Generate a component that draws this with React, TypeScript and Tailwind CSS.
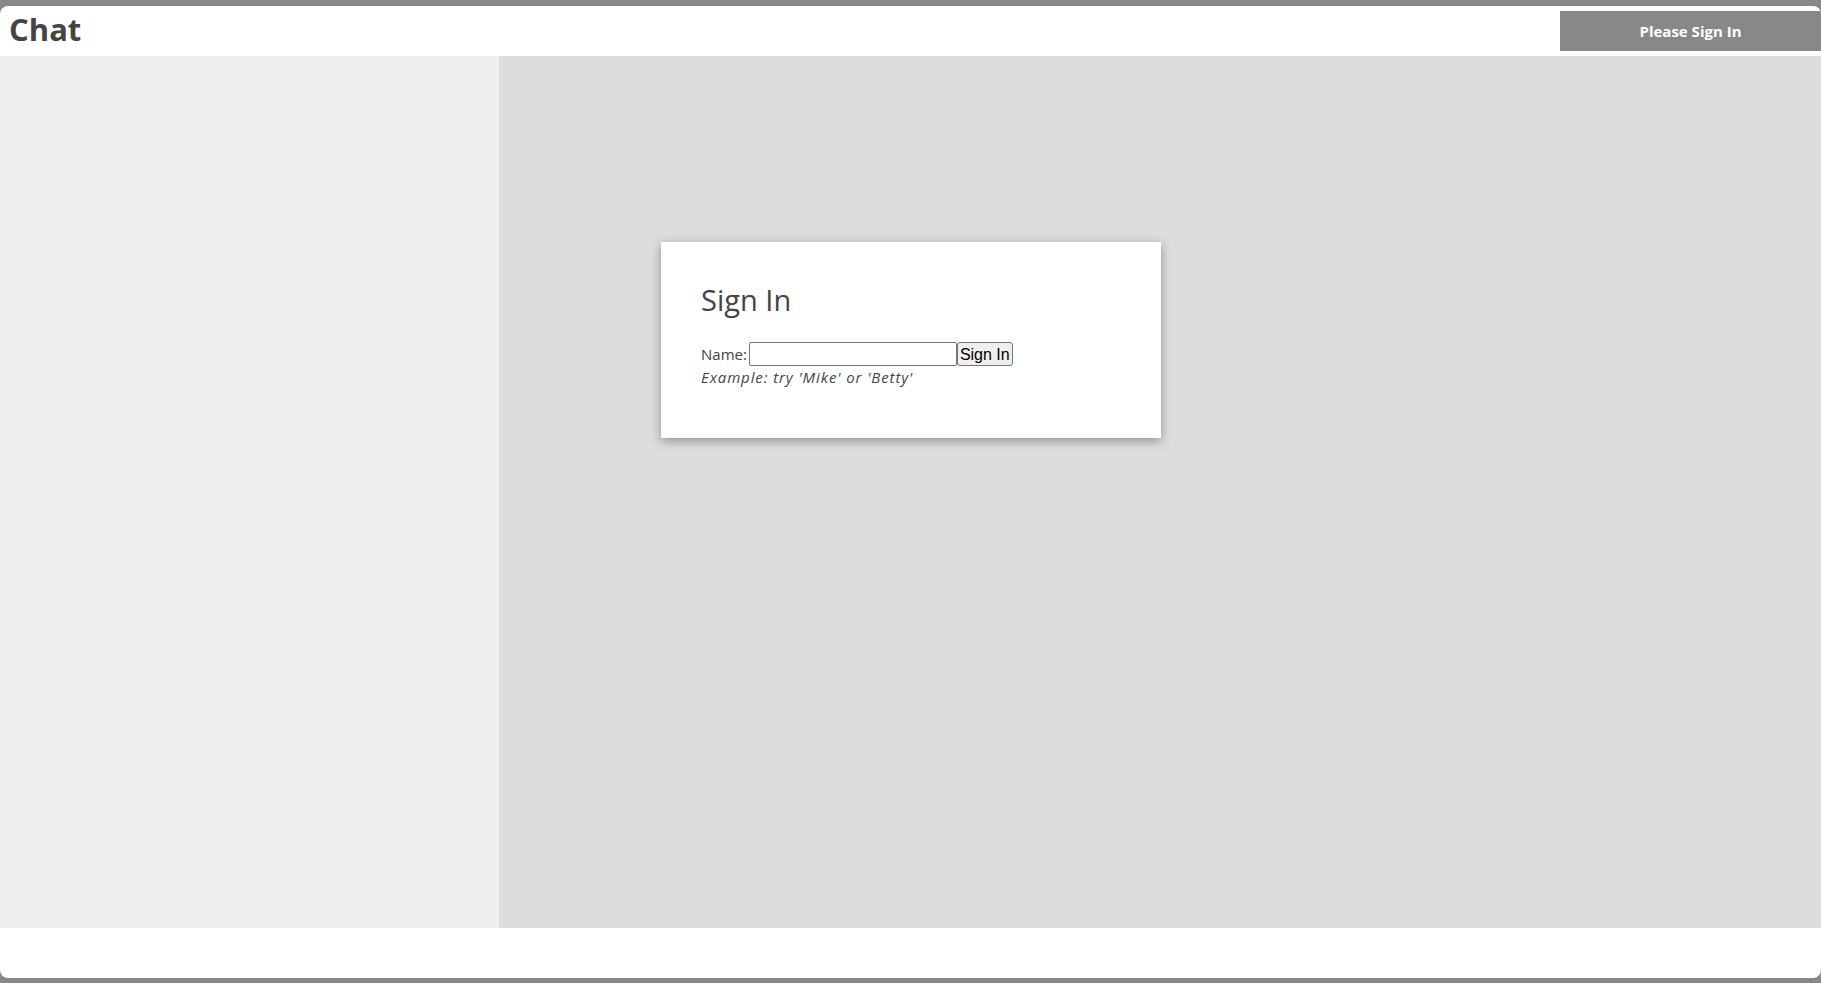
export default function App() {
  const font = { fontFamily: '"Trebuchet MS", "Open Sans", sans-serif' };
  return (
    <div className="h-screen bg-[#888] pt-[6px] pb-[5px] text-[#444] font-['Trebuchet_MS','Open_Sans',sans-serif]">
      <div className="flex h-full flex-col overflow-hidden rounded-lg bg-white">
        <header className="flex h-[50px] shrink-0 items-start justify-between">
          <h1 className="pl-[9px] pt-[3px] text-[31px] leading-[40px] font-bold">Chat</h1>
          <div className="mt-[5px] flex h-[40px] w-[261px] items-center justify-center bg-[#888] text-[15px] font-bold text-white">
            Please Sign In
          </div>
        </header>

        <div className="flex flex-1">
          <aside className="w-[499px] bg-[#eee]" />
          <main className="flex-1 bg-[#ddd] pl-[162px] pt-[186px]">
            <div className="h-[196px] w-[500px] bg-white px-[40px] pt-[40px] shadow-[0_3px_10px_rgba(0,0,0,0.35)]">
              <h2 className="text-[29px] leading-[36px]">Sign In</h2>
              <form className="mt-[24px] text-[15px]" onSubmit={(e) => e.preventDefault()}>
                <div className="flex items-center">
                  <label htmlFor="name" className="pr-[2px]">Name:</label>
                  <input
                    id="name"
                    className="h-[24px] w-[208px] rounded-[2px] border border-[#767676] bg-white px-[2px] text-[16px]"
                    style={font}
                  />
                  <button className="h-[24px] rounded-[3px] border border-[#767676] bg-[#efefef] px-[2px] text-[16px] text-black font-['Liberation_Sans',Arial,sans-serif]">
                    Sign In
                  </button>
                </div>
                <p className="mt-[1px] italic leading-[20px] tracking-[0.9px]">Example: try 'Mike' or 'Betty'</p>
              </form>
            </div>
          </main>
        </div>

        <footer className="h-[50px] shrink-0" />
      </div>
    </div>
  );
}
